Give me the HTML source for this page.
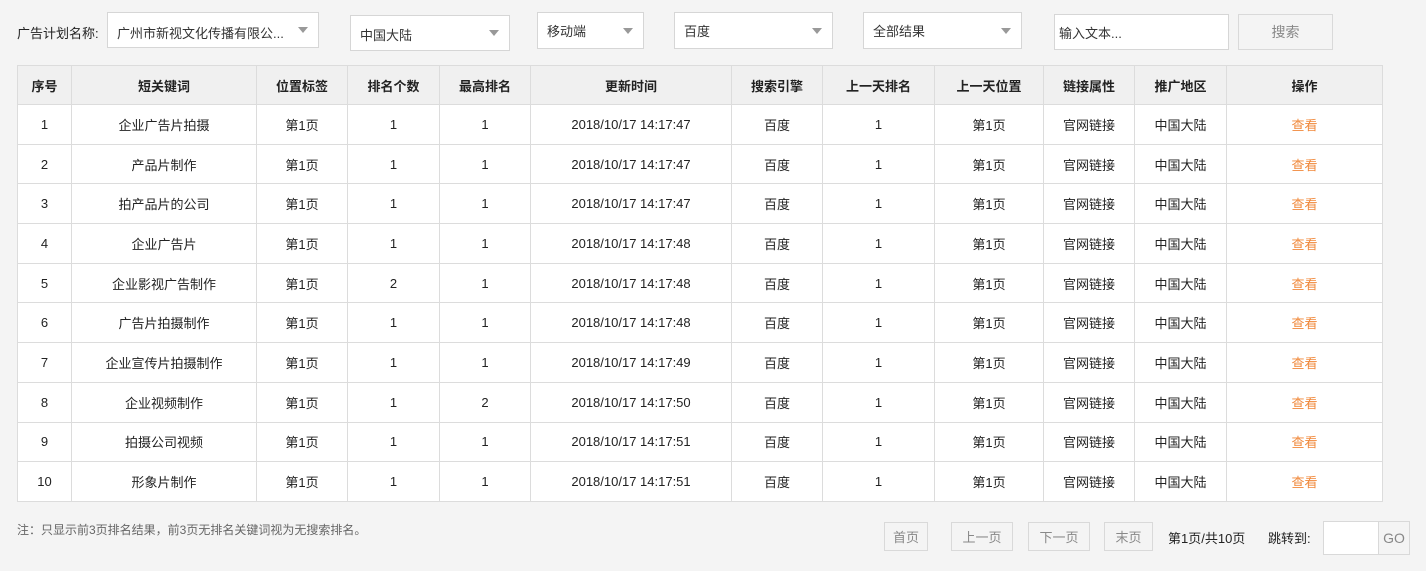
<!DOCTYPE html>
<html><head><meta charset="utf-8"><style>
*{box-sizing:border-box;margin:0;padding:0}
body{width:1426px;height:571px;background:#f4f4f4;font-family:"Liberation Sans","Noto Sans CJK SC",sans-serif;font-size:13px;color:#222;position:relative;overflow:hidden}
.a{position:absolute}
.sel{position:absolute;background:#fff;border:1px solid #d6d6d6;padding-left:9px;display:flex;align-items:center;color:#333}
.sel.dd:after{content:"";position:absolute;right:10px;top:50%;margin-top:-3px;border-left:5px solid transparent;border-right:5px solid transparent;border-top:6px solid #999}
table{position:absolute;left:17px;top:65px;width:1365px;border-collapse:collapse;background:#fff;table-layout:fixed}
td,th{border:1px solid #dcdcdc;text-align:center;height:39.7px;font-weight:normal;font-size:13px}
th{background:#f0f0f0;font-weight:bold;height:39px}
.o{color:#f0883a}
.btn{position:absolute;border:1px solid #d9d9d9;background:#f4f4f4;color:#888;display:flex;align-items:center;justify-content:center}
</style></head><body>
<div class="a" style="left:17px;top:23px;">广告计划名称:</div>
<div class="sel dd" style="left:107px;top:12px;width:212px;height:36px;align-items:flex-start;padding-top:10px">广州市新视文化传播有限公...</div>
<div class="sel dd" style="left:350px;top:15px;width:160px;height:36px;padding-top:3px">中国大陆</div>
<div class="sel dd" style="left:537px;top:12px;width:107px;height:37px">移动端</div>
<div class="sel dd" style="left:674px;top:12px;width:159px;height:37px">百度</div>
<div class="sel dd" style="left:863px;top:12px;width:159px;height:37px">全部结果</div>
<div class="sel" style="left:1054px;top:14px;width:175px;height:36px;padding-left:4px">输入文本...</div>
<div class="btn" style="left:1238px;top:14px;width:95px;height:36px;font-size:14px">搜索</div>
<table>
<colgroup><col style="width:54px"><col style="width:185px"><col style="width:91px"><col style="width:92px"><col style="width:91px"><col style="width:201px"><col style="width:91px"><col style="width:112px"><col style="width:109px"><col style="width:91px"><col style="width:92px"><col style="width:156px"></colgroup>
<tr><th>序号</th><th>短关键词</th><th>位置标签</th><th>排名个数</th><th>最高排名</th><th>更新时间</th><th>搜索引擎</th><th>上一天排名</th><th>上一天位置</th><th>链接属性</th><th>推广地区</th><th>操作</th></tr>
<tr><td>1</td><td>企业广告片拍摄</td><td>第1页</td><td>1</td><td>1</td><td>2018/10/17 14:17:47</td><td>百度</td><td>1</td><td>第1页</td><td>官网链接</td><td>中国大陆</td><td class="o">查看</td></tr>
<tr><td>2</td><td>产品片制作</td><td>第1页</td><td>1</td><td>1</td><td>2018/10/17 14:17:47</td><td>百度</td><td>1</td><td>第1页</td><td>官网链接</td><td>中国大陆</td><td class="o">查看</td></tr>
<tr><td>3</td><td>拍产品片的公司</td><td>第1页</td><td>1</td><td>1</td><td>2018/10/17 14:17:47</td><td>百度</td><td>1</td><td>第1页</td><td>官网链接</td><td>中国大陆</td><td class="o">查看</td></tr>
<tr><td>4</td><td>企业广告片</td><td>第1页</td><td>1</td><td>1</td><td>2018/10/17 14:17:48</td><td>百度</td><td>1</td><td>第1页</td><td>官网链接</td><td>中国大陆</td><td class="o">查看</td></tr>
<tr><td>5</td><td>企业影视广告制作</td><td>第1页</td><td>2</td><td>1</td><td>2018/10/17 14:17:48</td><td>百度</td><td>1</td><td>第1页</td><td>官网链接</td><td>中国大陆</td><td class="o">查看</td></tr>
<tr><td>6</td><td>广告片拍摄制作</td><td>第1页</td><td>1</td><td>1</td><td>2018/10/17 14:17:48</td><td>百度</td><td>1</td><td>第1页</td><td>官网链接</td><td>中国大陆</td><td class="o">查看</td></tr>
<tr><td>7</td><td>企业宣传片拍摄制作</td><td>第1页</td><td>1</td><td>1</td><td>2018/10/17 14:17:49</td><td>百度</td><td>1</td><td>第1页</td><td>官网链接</td><td>中国大陆</td><td class="o">查看</td></tr>
<tr><td>8</td><td>企业视频制作</td><td>第1页</td><td>1</td><td>2</td><td>2018/10/17 14:17:50</td><td>百度</td><td>1</td><td>第1页</td><td>官网链接</td><td>中国大陆</td><td class="o">查看</td></tr>
<tr><td>9</td><td>拍摄公司视频</td><td>第1页</td><td>1</td><td>1</td><td>2018/10/17 14:17:51</td><td>百度</td><td>1</td><td>第1页</td><td>官网链接</td><td>中国大陆</td><td class="o">查看</td></tr>
<tr><td>10</td><td>形象片制作</td><td>第1页</td><td>1</td><td>1</td><td>2018/10/17 14:17:51</td><td>百度</td><td>1</td><td>第1页</td><td>官网链接</td><td>中国大陆</td><td class="o">查看</td></tr>
</table>
<div class="a" style="left:17px;top:521px;color:#666;font-size:12px">注：只显示前3页排名结果，前3页无排名关键词视为无搜索排名。</div>
<div class="btn" style="left:884px;top:522px;width:44px;height:29px">首页</div>
<div class="btn" style="left:951px;top:522px;width:62px;height:29px">上一页</div>
<div class="btn" style="left:1028px;top:522px;width:62px;height:29px">下一页</div>
<div class="btn" style="left:1104px;top:522px;width:49px;height:29px">末页</div>
<div class="a" style="left:1168px;top:528px">第1页/共10页</div>
<div class="a" style="left:1268px;top:528px">跳转到:</div>
<div class="a" style="left:1323px;top:521px;width:56px;height:34px;background:#fff;border:1px solid #d9d9d9"></div>
<div class="btn" style="left:1378px;top:521px;width:32px;height:34px;font-size:14px">GO</div>
</body></html>
